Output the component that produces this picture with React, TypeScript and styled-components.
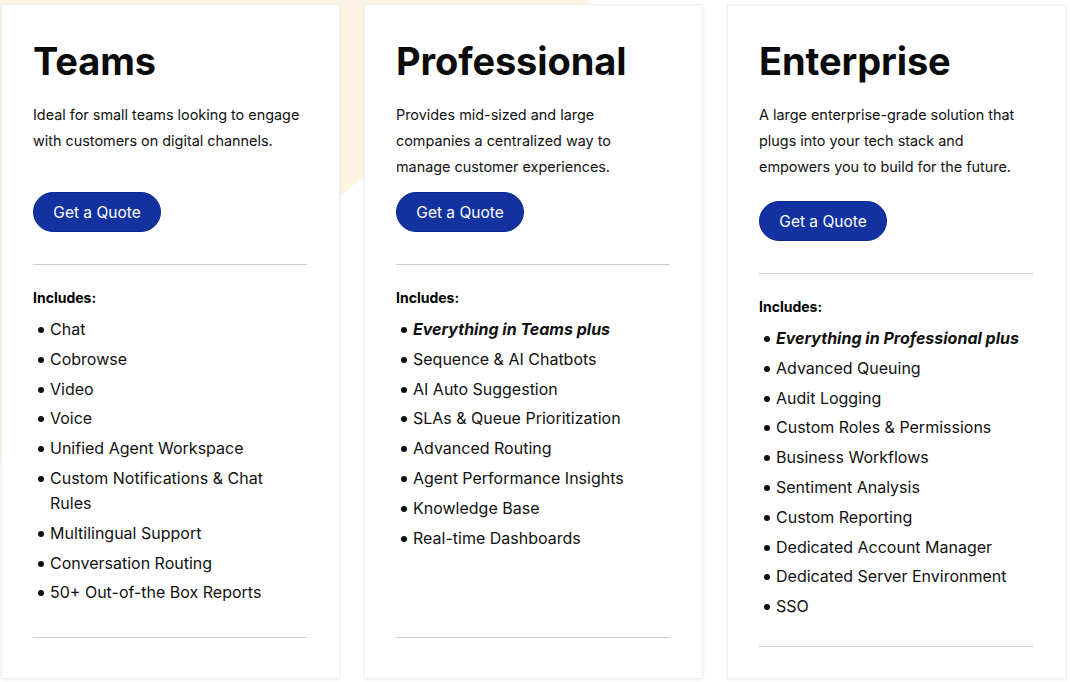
import React from 'react';
import styled, { createGlobalStyle } from 'styled-components';

type Plan = {
  id: string;
  name: string;
  description: string;
  lead?: string;
  features: string[];
  shifted?: boolean;
};

const plans: Plan[] = [
  {
    id: 'teams',
    name: 'Teams',
    description:
      'Ideal for small teams looking to engage with customers on digital channels.',
    features: [
      'Chat',
      'Cobrowse',
      'Video',
      'Voice',
      'Unified Agent Workspace',
      'Custom Notifications & Chat Rules',
      'Multilingual Support',
      'Conversation Routing',
      '50+ Out-of-the Box Reports',
    ],
  },
  {
    id: 'professional',
    name: 'Professional',
    description:
      'Provides mid-sized and large companies a centralized way to manage customer experiences.',
    lead: 'Everything in Teams plus',
    features: [
      'Sequence & AI Chatbots',
      'AI Auto Suggestion',
      'SLAs & Queue Prioritization',
      'Advanced Routing',
      'Agent Performance Insights',
      'Knowledge Base',
      'Real-time Dashboards',
    ],
  },
  {
    id: 'enterprise',
    name: 'Enterprise',
    description:
      'A large enterprise-grade solution that plugs into your tech stack and empowers you to build for the future.',
    lead: 'Everything in Professional plus',
    features: [
      'Advanced Queuing',
      'Audit Logging',
      'Custom Roles & Permissions',
      'Business Workflows',
      'Sentiment Analysis',
      'Custom Reporting',
      'Dedicated Account Manager',
      'Dedicated Server Environment',
      'SSO',
    ],
    shifted: true,
  },
];

const App: React.FC = () => {
  return (
    <>
      <GlobalStyle />
      <Page>
        {plans.map((plan) => (
          <Card key={plan.id} $shifted={plan.shifted}>
            <Title>{plan.name}</Title>
            <Intro $shifted={plan.shifted}>
              <Description>{plan.description}</Description>
            </Intro>
            <QuoteButton type="button">Get a Quote</QuoteButton>
            <Divider />
            <IncludesLabel>Includes:</IncludesLabel>
            <FeatureList>
              {plan.lead && (
                <Feature>
                  <Lead>{plan.lead}</Lead>
                </Feature>
              )}
              {plan.features.map((feature) => (
                <Feature key={feature}>{feature}</Feature>
              ))}
            </FeatureList>
            <BottomDivider />
          </Card>
        ))}
      </Page>
    </>
  );
};

const GlobalStyle = createGlobalStyle`
  html, body {
    margin: 0;
    padding: 0;
    background: #ffffff;
  }
  body {
    font-family: 'Inter', 'Noto Sans', Arial, sans-serif;
    color: #000;
  }
  * {
    box-sizing: border-box;
  }
`;

const Page = styled.main`
  width: 1070px;
  height: 682px;
  padding: 5px 5px 4px 2px;
  display: grid;
  grid-template-columns: repeat(3, 337px);
  column-gap: 26px;
  background-color: #ffffff;
  background-image: linear-gradient(
    to bottom right,
    #fdf4e4 50%,
    transparent 50%
  );
  background-size: 590px 462px;
  background-repeat: no-repeat;
`;

const Card = styled.section<{ $shifted?: boolean }>`
  display: flex;
  flex-direction: column;
  background: #ffffff;
  padding: 34px 32px ${(p) => (p.$shifted ? '31px' : '40px')} 31px;
  box-shadow: 0 0 0 1px #efefef, 0 1px 5px rgba(0, 0, 0, 0.09);
`;

const Title = styled.h2`
  margin: 0;
  font-family: 'Inter', sans-serif;
  font-size: 38px;
  font-weight: 700;
  line-height: 44px;
  letter-spacing: -0.1px;
  color: #0b0b0b;
`;

const Intro = styled.div<{ $shifted?: boolean }>`
  margin-top: 19px;
  min-height: ${(p) => (p.$shifted ? '99px' : '90px')};
`;

const Description = styled.p`
  margin: 0;
  max-width: 270px;
  font-size: 14.4px;
  line-height: 26px;
  color: #111;
`;

const QuoteButton = styled.button`
  align-self: flex-start;
  width: 128px;
  height: 40px;
  border: 1px solid #0c2a8e;
  border-radius: 20px;
  background: #1232a0;
  color: #ffffff;
  font-family: 'Inter', sans-serif;
  font-size: 15.5px;
  font-weight: 400;
  cursor: pointer;
`;

const Divider = styled.hr`
  margin: 32px 0 0;
  border: 0;
  border-top: 1px solid #cfcfcf;
  width: 100%;
`;

const BottomDivider = styled(Divider)`
  margin-top: auto;
`;

const IncludesLabel = styled.div`
  margin-top: 24px;
  font-size: 14px;
  font-weight: 700;
  line-height: 18px;
`;

const FeatureList = styled.ul`
  margin: 10px 0 0;
  padding: 0 0 0 17px;
  list-style: none;
`;

const Feature = styled.li`
  position: relative;
  font-size: 16px;
  line-height: 25px;
  margin-bottom: 4.8px;
  color: #111;

  &::before {
    content: '';
    position: absolute;
    left: -12px;
    top: 10px;
    width: 6px;
    height: 6px;
    border-radius: 50%;
    background: #111;
  }
`;

const Lead = styled.em`
  font-weight: 700;
  font-style: italic;
`;

export default App;
